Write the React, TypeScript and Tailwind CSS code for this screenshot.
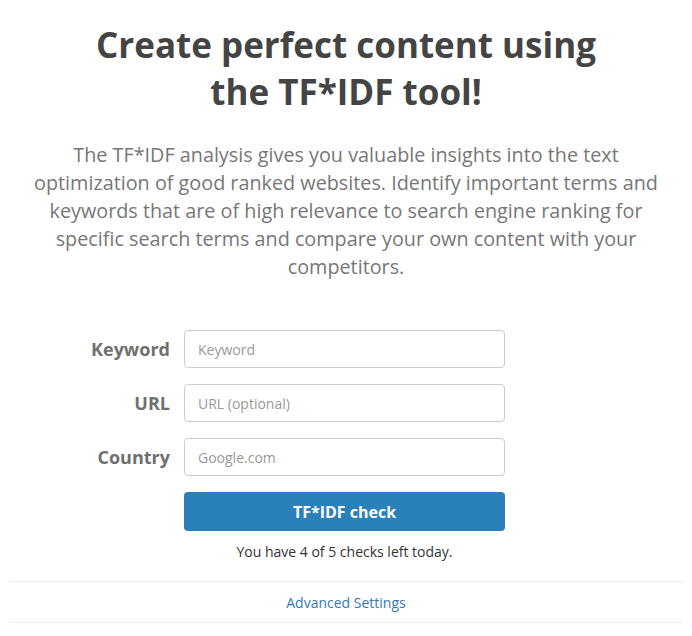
import React from "react";

export default function App() {
  const font = { fontFamily: '"Open Sans", "Noto Sans", sans-serif' };
  const rows = [
    { label: "Keyword", ph: "Keyword" },
    { label: "URL", ph: "URL (optional)" },
    { label: "Country", ph: "Google.com" },
  ];
  return (
    <div className="w-[692px] h-[636px] bg-white overflow-hidden" style={font}>
      <div className="px-[9px]">
        <h1 className="pt-[21px] text-center font-bold text-[35px] leading-[47px] text-[#444]">
          Create perfect content using
          <br />
          the TF*IDF tool!
        </h1>
        <p className="mt-[26px] mx-auto w-[640px] text-center text-[19.8px] leading-[28px] text-[#777]">
          The TF*IDF analysis gives you valuable insights into the text optimization of good ranked websites. Identify important terms and keywords that are of high relevance to search engine ranking for specific search terms and compare your own content with your competitors.
        </p>
        <div className="mt-[49px] flex flex-col gap-[16px]">
          {rows.map((r) => (
            <div key={r.label} className="flex items-center">
              <label className="w-[161px] text-right font-bold text-[18px] text-[#707070]">
                {r.label}
              </label>
              <input
                className="ml-[14px] w-[321px] h-[38px] rounded-[4px] border border-[#ccc] px-[13px] text-[14px] text-[#555] placeholder-[#999] outline-none"
                placeholder={r.ph}
              />
            </div>
          ))}
        </div>
        <div className="mt-[16px] ml-[175px] w-[321px]">
          <button className="w-full h-[39px] rounded-[4px] bg-[#2a80b9] text-white font-bold text-[16px]">
            TF*IDF check
          </button>
          <div className="mt-[10px] text-center text-[14px] text-[#333]">
            You have 4 of 5 checks left today.
          </div>
        </div>
        <div className="mt-[19px] border-t border-b border-[#eee] py-[8px] text-center">
          <a className="text-[14px] text-[#3379b7] leading-[22px]">Advanced Settings</a>
        </div>
      </div>
    </div>
  );
}
